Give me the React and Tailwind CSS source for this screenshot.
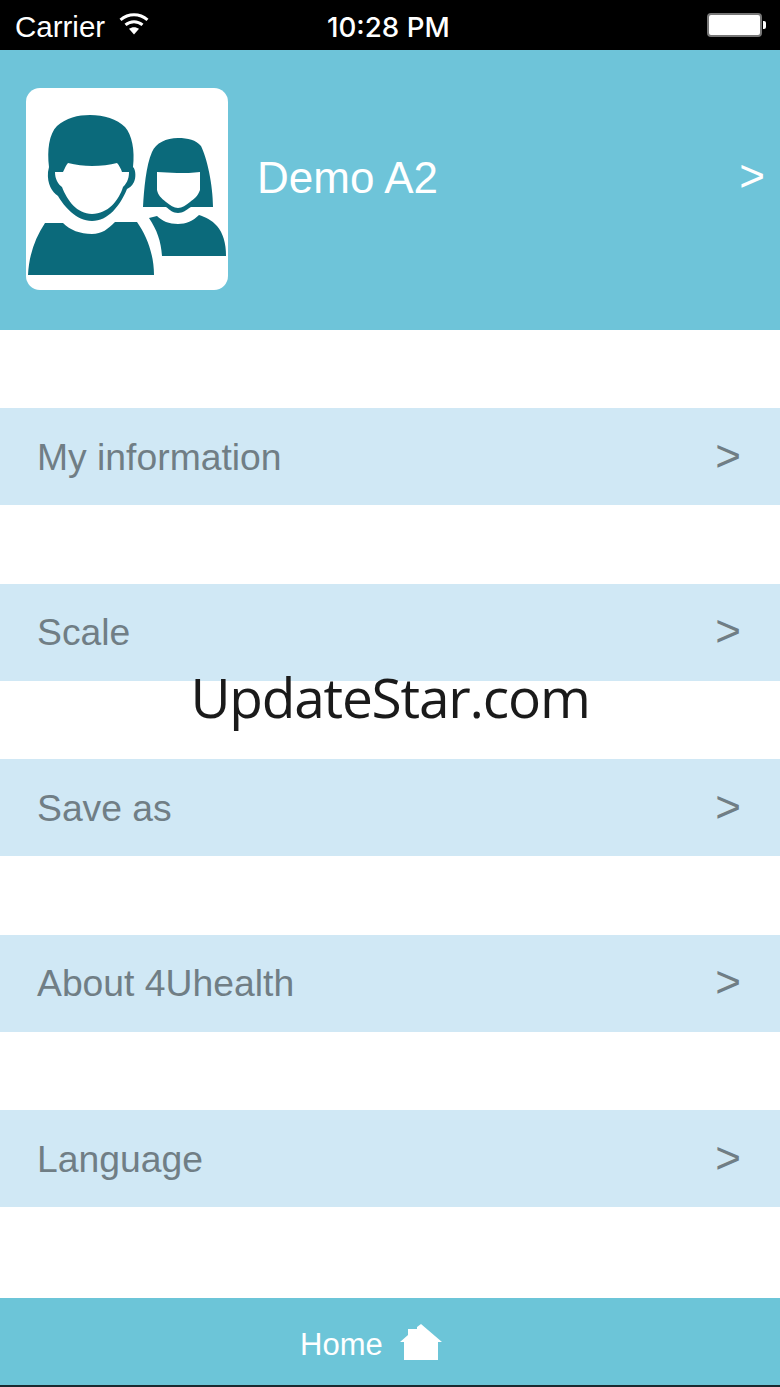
const rows = ['My information', 'Scale', 'Save as', 'About 4Uhealth', 'Language']

function Avatar() {
  return (
    <div className="w-[202px] h-[202px] mb-[2px] bg-white rounded-[14px] shrink-0">
      <svg width="202" height="202" viewBox="26 88 202 202">
        <g fill="#0b6a7b">
          <path d="M49 167C47 150 49 134 57 126C66 118 78 115 90 115C104 115 117 119 125 127C132 135 135 150 133 167C136 170 136 178 134 182C132 186 129 188 127 189C120 206 108 221 92 221C76 221 64 206 58 196C52 192 47 184 48 172Z" />
          <path d="M28 275C29 255 35 238 45 223L63 223C70 230 80 234 92 234C102 234 108 229 115 222L137 222C147 236 154 255 154 275Z" />
          <path d="M143 207C144 190 146 165 152 152C156 143 166 138 178 138C188 138 196 140 201 146C207 158 213 185 213 207L191 207C186 210 183 213 178 213C173 213 170 210 166 207Z" />
          <path d="M149 218L157 216C162 221 169 224 178 224C186 224 193 221 199 215C205 217 212 220 217 226C223 233 226 243 226 256L162 256C161 241 157 230 149 218Z" />
        </g>
        <g fill="#fff">
          <path d="M55 172L63 172C65 168 66 165 68 163C76 165 84 166 92 166C101 166 110 165 117 163C119 165 121 169 122 172L129 172C129 177 128 182 123 187C119 200 108 214 92 214C77 214 67 200 62 187C58 184 55 179 55 172Z" />
          <path d="M157 172C164 172 170 173 177 173C185 173 193 173 200 172L200 190C198 196 194 199 190 202C186 205 182 208 178 208C174 208 170 205 166 202C161 198 158 195 157 190Z" />
        </g>
      </svg>
    </div>
  )
}

function StatusBar() {
  return (
    <div className="h-[50px] bg-black text-white flex items-center justify-between shrink-0 relative">
      <div className="flex items-center pl-[15px]">
        <span className="text-[29.5px] leading-none mt-[3px]">Carrier</span>
        <svg className="ml-[14px] mb-[3px]" width="30" height="22" viewBox="0 0 30 22">
          <path d="M15 21.5L10 15.8C13 13.6 17 13.6 20 15.8Z" fill="#fff" />
          <path d="M6.5 11.8C11.5 7.6 18.5 7.6 23.5 11.8" fill="none" stroke="#fff" strokeWidth="3" />
          <path d="M1.5 6.8C9.5 0 20.5 0 28.5 6.8" fill="none" stroke="#fff" strokeWidth="3" />
        </svg>
      </div>
      <span className="absolute left-[327px] top-[11px] text-[27.7px] leading-[32px] font-medium font-['Inter',sans-serif]">10:28 PM</span>
      <div className="flex items-center pr-[14px]">
        <div className="w-[55px] h-[24px] bg-white rounded-[4px] border-2 border-[#777]" />
        <div className="w-[3px] h-[8px] bg-white rounded-r-[2px] ml-[1px]" />
      </div>
    </div>
  )
}

export default function App() {
  return (
    <div className="relative h-[1387px] w-[780px] bg-white flex flex-col font-['Liberation_Sans',sans-serif] overflow-hidden">
      <StatusBar />

      <div className="h-[280px] bg-[#6ec4d9] flex items-center pl-[26px] pr-[15px] shrink-0 text-white">
        <Avatar />
        <span className="ml-[29px] text-[44px] leading-none mb-[24px]">Demo A2</span>
        <span className="ml-auto text-[44px] leading-none mb-[28px]">&gt;</span>
      </div>

      <div className="mt-[78px] flex flex-col gap-[78.5px]">
        {rows.map(label => (
          <div key={label} className="h-[97px] bg-[#d0e8f5] flex items-center justify-between pl-[37px] pr-[39px] text-[#707e85]">
            <span className="text-[37.3px] leading-none mt-[2px]">{label}</span>
            <span className="text-[44px] leading-none mb-[2px]">&gt;</span>
          </div>
        ))}
      </div>

      <div className="mt-auto h-[87px] bg-[#6cc5d8] flex items-center pl-[300px] text-white shrink-0">
        <span className="text-[31px] leading-none mt-[5px]">Home</span>
        <svg className="ml-[17px] mt-[2px]" width="42" height="37" viewBox="400 1324 42 37">
          <path d="M421 1324L442 1342L438 1342L438 1360L404 1360L404 1342L400 1342L408 1335L408 1329L417 1329L417 1327Z" fill="#fff" />
        </svg>
      </div>
      <div className="h-[2px] bg-[#1a2a30] shrink-0" />

      <div className="absolute left-0 right-0 top-[659px] text-center text-[55px] leading-[76px] tracking-[-1.2px] text-[#1a1a1a] font-normal font-['Open_Sans',sans-serif]">
        UpdateStar.com
      </div>
    </div>
  )
}
